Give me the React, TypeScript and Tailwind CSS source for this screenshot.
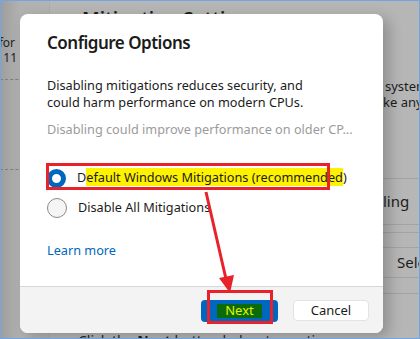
import React from "react"

const font = { fontFamily: '"Noto Sans", "Liberation Sans", sans-serif' }

function Radio({ checked }: { checked?: boolean }) {
  return checked ? (
    <span className="w-[19px] h-[19px] rounded-full border-[5px] border-[#0067c0] bg-white flex-shrink-0" />
  ) : (
    <span className="w-[20px] h-[20px] rounded-full border border-[#8a8a8a] bg-[#f5f5f5] flex-shrink-0" />
  )
}

function BackgroundPage() {
  return (
    <div className="absolute inset-0 flex bg-[#b6b6b6]">
      {/* sidebar */}
      <div className="w-[50px] h-full bg-[linear-gradient(90deg,#9d9d9d,#b1b1b1_40%,#b3b3b3)] border-r border-[#adadad] overflow-hidden flex flex-col items-end">
        <div className="mt-[35px] w-[100px] text-right text-[12px] leading-[15px] text-[#222] pr-[34px] whitespace-nowrap">
          <p>Tweaks for</p>
          <p>Windows 11</p>
        </div>
        <div className="mt-[14px] w-full border-t border-dashed border-[#7d7d7d]" />
        <div className="mt-[89px] w-full border-t border-dashed border-[#7d7d7d]" />
      </div>
      {/* content */}
      <div className="flex-1 flex flex-col overflow-hidden text-[#1d1d1d] [&>*]:shrink-0">
        <p className="mt-[7px] ml-[32px] text-[19px] font-semibold leading-[24px] whitespace-nowrap">Mitigation Settings</p>
        <div className="mt-[47px] ml-[335px] text-[13px] leading-[16px] whitespace-nowrap">
          <p>system files</p>
          <p className="-ml-[2px]">ke any</p>
        </div>
        <div className="mt-[68px] ml-[333px] h-[46px] border-t border-[#a3a3a3] flex items-center">
          <span className="text-[15px] whitespace-nowrap">ling</span>
        </div>
        <div className="ml-[333px] border-t border-[#a3a3a3]" />
        <div className="mt-[7px] ml-[333px] border-t border-[#a3a3a3]" />
        <div className="mt-[14px] ml-[333px] h-[30px] border-t border-[#a3a3a3] flex items-center pl-[14px]">
          <span className="text-[15px] whitespace-nowrap">Select</span>
        </div>
        <div className="ml-[333px] border-t border-[#a3a3a3]" />
        <div className="mt-[15px] ml-[333px] border-t border-[#a3a3a3]" />
        <p className="mt-[39px] ml-[28px] text-[14px] leading-[16px] whitespace-nowrap">Click the <b>Next</b> button below to continue</p>
      </div>
    </div>
  )
}

function Dialog() {
  return (
    <div className="absolute left-[20px] top-[14px] w-[363px] h-[319px] bg-white rounded-[8px] shadow-[6px_4px_14px_rgba(0,0,0,0.22)] flex flex-col overflow-hidden">
      <div className="flex-1 px-[27px] pt-[18px] text-[#1b1b1b]">
        <h2 className="text-[17px] font-semibold leading-[22px] tracking-[-0.5px]">Configure Options</h2>
        <p className="mt-[23px] text-[12.7px] leading-[17px]">
          Disabling mitigations reduces security, and
          <br />
          could harm performance on modern CPUs.
        </p>
        <p className="mt-[10px] text-[12.7px] leading-[17px] text-[#9b9b9b] whitespace-nowrap">
          Disabling could improve performance on older CP...
        </p>
        <div className="mt-[30px] flex flex-col gap-[10px]">
          <label className="flex items-center gap-[11px] h-[20px] text-[12.7px]">
            <Radio checked />
            <span>
              D<span className="bg-[#fff200]">efault Windows Mitigations (recommended</span>)
            </span>
          </label>
          <label className="flex items-center gap-[11px] h-[20px] text-[12.7px]">
            <Radio />
            <span>Disable All Mitigations</span>
          </label>
        </div>
        <a className="block mt-[24px] text-[12.7px] leading-[17px] text-[#0067c0]">Learn more</a>
      </div>
      <div className="h-[47px] bg-[#f3f3f3] border-t border-[#d6d6d6] flex justify-end items-start gap-[15px] pt-[13px] pr-[14px]">
        <button className="w-[77px] h-[22px] rounded-[4px] bg-[#0067c0] flex items-center justify-center text-[13px]">
          <span className="bg-[#0b6b0b] text-[#e4f200] px-[8px] leading-[13px] pb-[1px]">Next</span>
        </button>
        <button className="w-[76px] h-[21px] rounded-[4px] bg-white border border-[#e3e3e3] text-[13px] text-[#1b1b1b]">
          Cancel
        </button>
      </div>
    </div>
  )
}

function Annotations() {
  return (
    <>
      <div className="absolute left-[46px] top-[163px] w-[284px] h-[27px] border-[3px] border-[#e8222a]" />
      <div className="absolute left-[207px] top-[290px] w-[66px] h-[34px] border-[3px] border-[#e8222a]" />
      <svg className="absolute left-0 top-0" width="420" height="339" viewBox="0 0 420 339">
        <line x1="206" y1="192" x2="226" y2="279" stroke="#e8222a" strokeWidth="3" />
        <polygon points="230,293 219,278 234,275" fill="#e8222a" />
      </svg>
    </>
  )
}

export default function App() {
  return (
    <div className="w-[420px] h-[339px] relative overflow-hidden" style={font}>
      <BackgroundPage />
      <Dialog />
      <Annotations />
      <div className="absolute inset-0 border border-[#6ea7e4] pointer-events-none" />
    </div>
  )
}
